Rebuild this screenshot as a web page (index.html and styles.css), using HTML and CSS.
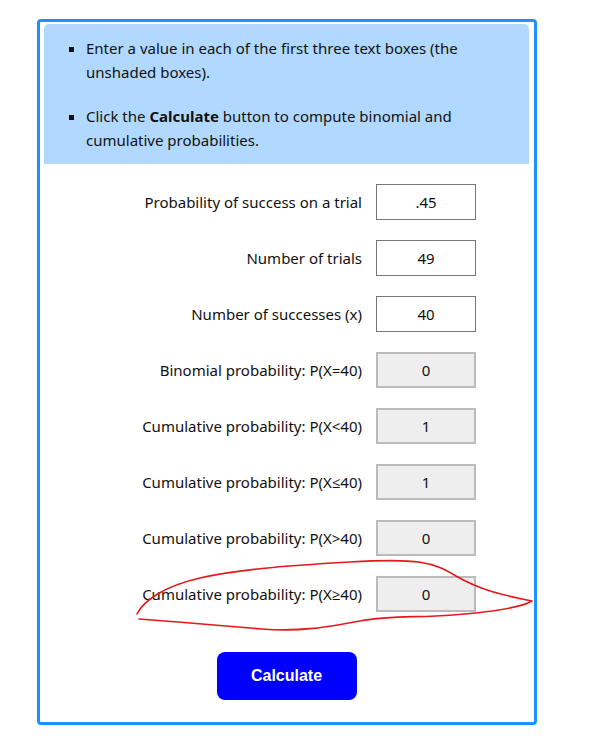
FILE: index.html
```html
<!DOCTYPE html>
<html lang="en">
<head>
  <meta charset="UTF-8" />
  <meta name="viewport" content="width=device-width, initial-scale=1.0"/>
  <title>Binomial Probability Calculator</title>
  <link rel="stylesheet" href="styles.css">
</head>
<body>
  <div class="calc-box">
    <div class="instructions">
      <ul>
        <li>Enter a value in each of the first three text boxes (the unshaded boxes).</li>
        <li>Click the <b>Calculate</b> button to compute binomial and cumulative probabilities.</li>
      </ul>
    </div>

    <div class="form">
      <div class="row">
        <label>Probability of success on a trial</label>
        <input type="text" class="field" value=".45">
      </div>
      <div class="row">
        <label>Number of trials</label>
        <input type="text" class="field" value="49">
      </div>
      <div class="row">
        <label>Number of successes (x)</label>
        <input type="text" class="field" value="40">
      </div>
      <div class="row">
        <label>Binomial probability: P(X=40)</label>
        <input type="text" class="field shaded" value="0" readonly>
      </div>
      <div class="row">
        <label>Cumulative probability: P(X&lt;40)</label>
        <input type="text" class="field shaded" value="1" readonly>
      </div>
      <div class="row">
        <label>Cumulative probability: P(X&le;40)</label>
        <input type="text" class="field shaded" value="1" readonly>
      </div>
      <div class="row">
        <label>Cumulative probability: P(X&gt;40)</label>
        <input type="text" class="field shaded" value="0" readonly>
      </div>
      <div class="row">
        <label>Cumulative probability: P(X&ge;40)</label>
        <input type="text" class="field shaded" value="0" readonly>
      </div>
    </div>

    <div class="actions">
      <button class="calc-btn">Calculate</button>
    </div>
  </div>

  <!-- hand-drawn annotation on top of the screenshot -->
  <svg class="scribble" width="591" height="739" viewBox="0 0 591 739">
    <path d="M137,614 C144,600 165,586 200,578 S280,566 350,562 S432,562 456,576 S502,595 532,601 C522,607 490,612 453,615 S392,615 360,621 S300,632 262,629 S180,622 139,619"
      fill="none" stroke="#e3191c" stroke-width="1.6" stroke-linejoin="round" stroke-linecap="round"/>
  </svg>
</body>
</html>
```

FILE: styles.css
```css
body {
  margin: 0;
  font-family: "Noto Sans", "Open Sans", sans-serif;
  color: #111;
  position: relative;
}

.calc-box {
  width: 500px;
  box-sizing: border-box;
  margin: 19px 0 0 37px;
  border: 3px solid #1e90ff;
  border-radius: 4px;
  padding: 2px 5px 22px 4px;
  background: white;
}

.instructions {
  background: #b1d9ff;
  border-radius: 5px 5px 0 0;
  padding: 12px 20px 12px 0;
  font-size: 15px;
  line-height: 24px;
}

.instructions ul {
  margin: 0;
  padding-left: 42px;
  list-style: square;
}

.instructions li + li {
  margin-top: 20px;
}

.form {
  padding-top: 20px;
}

.row {
  display: flex;
  align-items: center;
  gap: 14px;
  margin-bottom: 20px;
}

.row label {
  width: 318px;
  text-align: right;
  font-size: 15px;
}

.field {
  width: 100px;
  height: 36px;
  box-sizing: border-box;
  border: 1px solid #777;
  text-align: center;
  font-family: "Noto Sans", "Open Sans", sans-serif;
  font-size: 15px;
  color: #111;
  padding: 0;
}

.field.shaded {
  background: #eeeeee;
  border: 2px solid #bbbbbb;
}

.actions {
  text-align: center;
  padding-top: 20px;
}

.calc-btn {
  width: 140px;
  height: 48px;
  background: #0000ff;
  color: white;
  border: none;
  border-radius: 8px;
  font-family: "Liberation Sans", Arial, sans-serif;
  font-weight: bold;
  font-size: 16px;
  cursor: pointer;
}

.scribble {
  position: absolute;
  top: 0;
  left: 0;
  pointer-events: none;
}
```
